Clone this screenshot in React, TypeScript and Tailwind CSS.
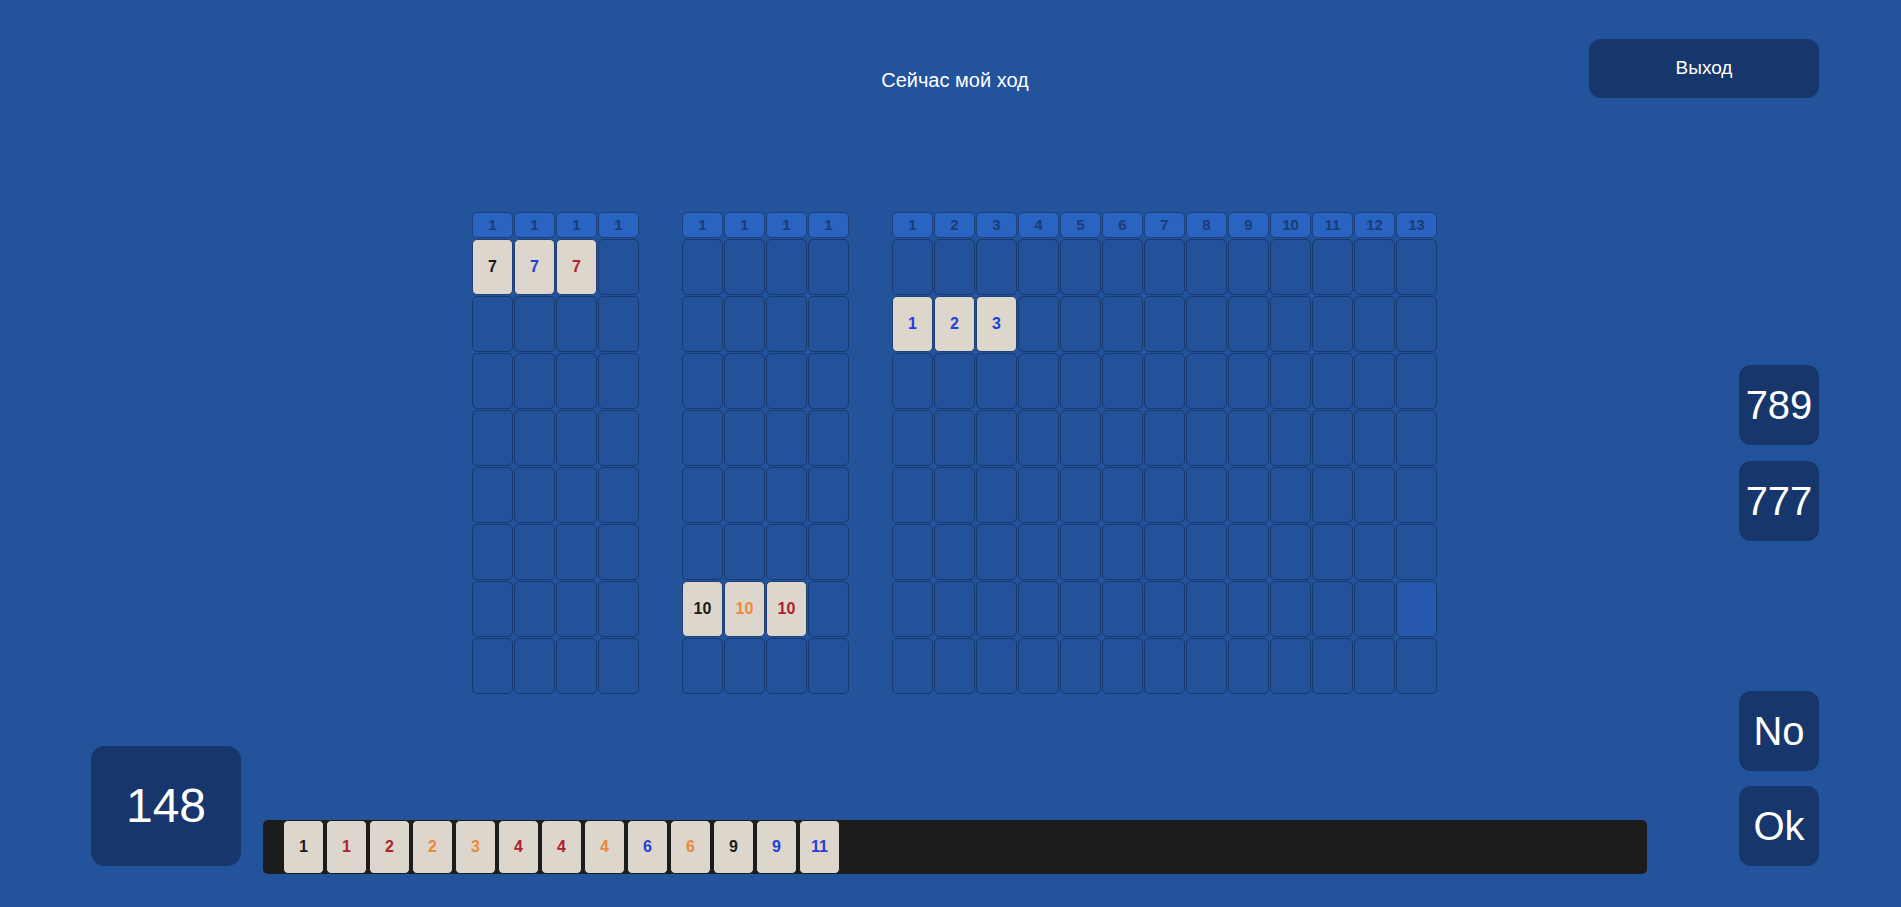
import React from "react";

type Color = "black" | "blue" | "red" | "orange";
type Tile = { n: number; c: Color };

const textColor: Record<Color, string> = {
  black: "text-[#1b1b1b]",
  blue: "text-[#2340d6]",
  red: "text-[#b0202c]",
  orange: "text-[#ea873c]",
};

// board groups: columns count, header labels, placed tiles keyed "row-col"
const groups: { cols: number; labels: string[]; tiles: Record<string, Tile>; highlight?: string }[] = [
  {
    cols: 4,
    labels: ["1", "1", "1", "1"],
    tiles: { "0-0": { n: 7, c: "black" }, "0-1": { n: 7, c: "blue" }, "0-2": { n: 7, c: "red" } },
  },
  {
    cols: 4,
    labels: ["1", "1", "1", "1"],
    tiles: { "6-0": { n: 10, c: "black" }, "6-1": { n: 10, c: "orange" }, "6-2": { n: 10, c: "red" } },
  },
  {
    cols: 13,
    labels: ["1", "2", "3", "4", "5", "6", "7", "8", "9", "10", "11", "12", "13"],
    tiles: { "1-0": { n: 1, c: "blue" }, "1-1": { n: 2, c: "blue" }, "1-2": { n: 3, c: "blue" } },
    highlight: "6-12",
  },
];

const rack: Tile[] = [
  { n: 1, c: "black" },
  { n: 1, c: "red" },
  { n: 2, c: "red" },
  { n: 2, c: "orange" },
  { n: 3, c: "orange" },
  { n: 4, c: "red" },
  { n: 4, c: "red" },
  { n: 4, c: "orange" },
  { n: 6, c: "blue" },
  { n: 6, c: "orange" },
  { n: 9, c: "black" },
  { n: 9, c: "blue" },
  { n: 11, c: "blue" },
];

const ROWS = 8;

function BoardGroup({ cols, labels, tiles, highlight }: (typeof groups)[number]) {
  const cells = [];
  for (let r = 0; r < ROWS; r++) {
    for (let c = 0; c < cols; c++) {
      const key = `${r}-${c}`;
      const tile = tiles[key];
      if (tile) {
        cells.push(
          <div
            key={key}
            className={`flex h-[56px] w-[41px] items-center justify-center rounded-[5px] border border-[#1d3f74] bg-[#dcd6cc] text-[16px] font-bold ${textColor[tile.c]}`}
          >
            {tile.n}
          </div>
        );
      } else {
        cells.push(
          <div
            key={key}
            className={`h-[56px] w-[41px] rounded-[5px] border border-[#173a70] ${
              highlight === key ? "bg-[#2659ad]" : "bg-[#23529b]"
            }`}
          />
        );
      }
    }
  }

  return (
    <div className="flex flex-col gap-[1px]">
      <div className="flex gap-[1px]">
        {labels.map((l, i) => (
          <div
            key={i}
            className="flex h-[26px] w-[41px] items-center justify-center rounded-[5px] border border-[#1a3f7a] bg-[#2964c2] text-[15px] font-bold text-[#1b3d74]"
          >
            {l}
          </div>
        ))}
      </div>
      <div className="grid gap-[1px]" style={{ gridTemplateColumns: `repeat(${cols}, 41px)` }}>
        {cells}
      </div>
    </div>
  );
}

export default function App() {
  return (
    <div className="flex h-[907px] w-full flex-col overflow-hidden bg-[#23539b] font-['Liberation_Sans',Arial,sans-serif] text-white">
      <header className="grid grid-cols-[1fr_auto_1fr] items-start pt-[39px]">
        <div />
        <h1 className="mt-[29px] pl-[9px] text-[20px] leading-[24px]">Сейчас мой ход</h1>
        <div className="flex justify-end pr-[82px]">
          <button className="h-[59px] w-[230px] rounded-[12px] bg-[#17366b] text-[19px]" type="button">
            Выход
          </button>
        </div>
      </header>

      <div className="flex flex-1">
        <div className="flex flex-1 flex-col pb-[33px]">
          <div className="mt-[114px] flex gap-[43px] pl-[472px]">
            {groups.map((g, i) => (
              <BoardGroup key={i} {...g} />
            ))}
          </div>

          <div className="mt-auto flex items-end pl-[91px] pr-[92px]">
            <div className="mb-[8px] flex h-[120px] w-[150px] items-center justify-center rounded-[14px] bg-[#17366b] text-[48px]">
              148
            </div>
            <div className="ml-[22px] flex h-[54px] flex-1 gap-[2px] rounded-[5px] bg-[#1c1c1c] pl-[20px]">
              {rack.map((t, i) => (
                <div
                  key={i}
                  className={`flex h-[54px] w-[41px] items-center justify-center rounded-[5px] border border-[#1c1c1c] bg-[#dcd6cc] text-[16px] font-bold ${textColor[t.c]}`}
                >
                  {t.n}
                </div>
              ))}
            </div>
          </div>
        </div>

        <aside className="mr-[82px] flex w-[80px] flex-col gap-[15px] pt-[267px]">
          <div className="flex h-[80px] items-center justify-center rounded-[12px] bg-[#17366b] text-[40px]">789</div>
          <div className="mt-[1px] flex h-[80px] items-center justify-center rounded-[12px] bg-[#17366b] text-[40px]">777</div>
          <button className="mt-[135px] h-[80px] rounded-[12px] bg-[#17366b] text-[40px]" type="button">
            No
          </button>
          <button className="h-[80px] rounded-[12px] bg-[#17366b] text-[40px]" type="button">
            Ok
          </button>
        </aside>
      </div>
    </div>
  );
}
